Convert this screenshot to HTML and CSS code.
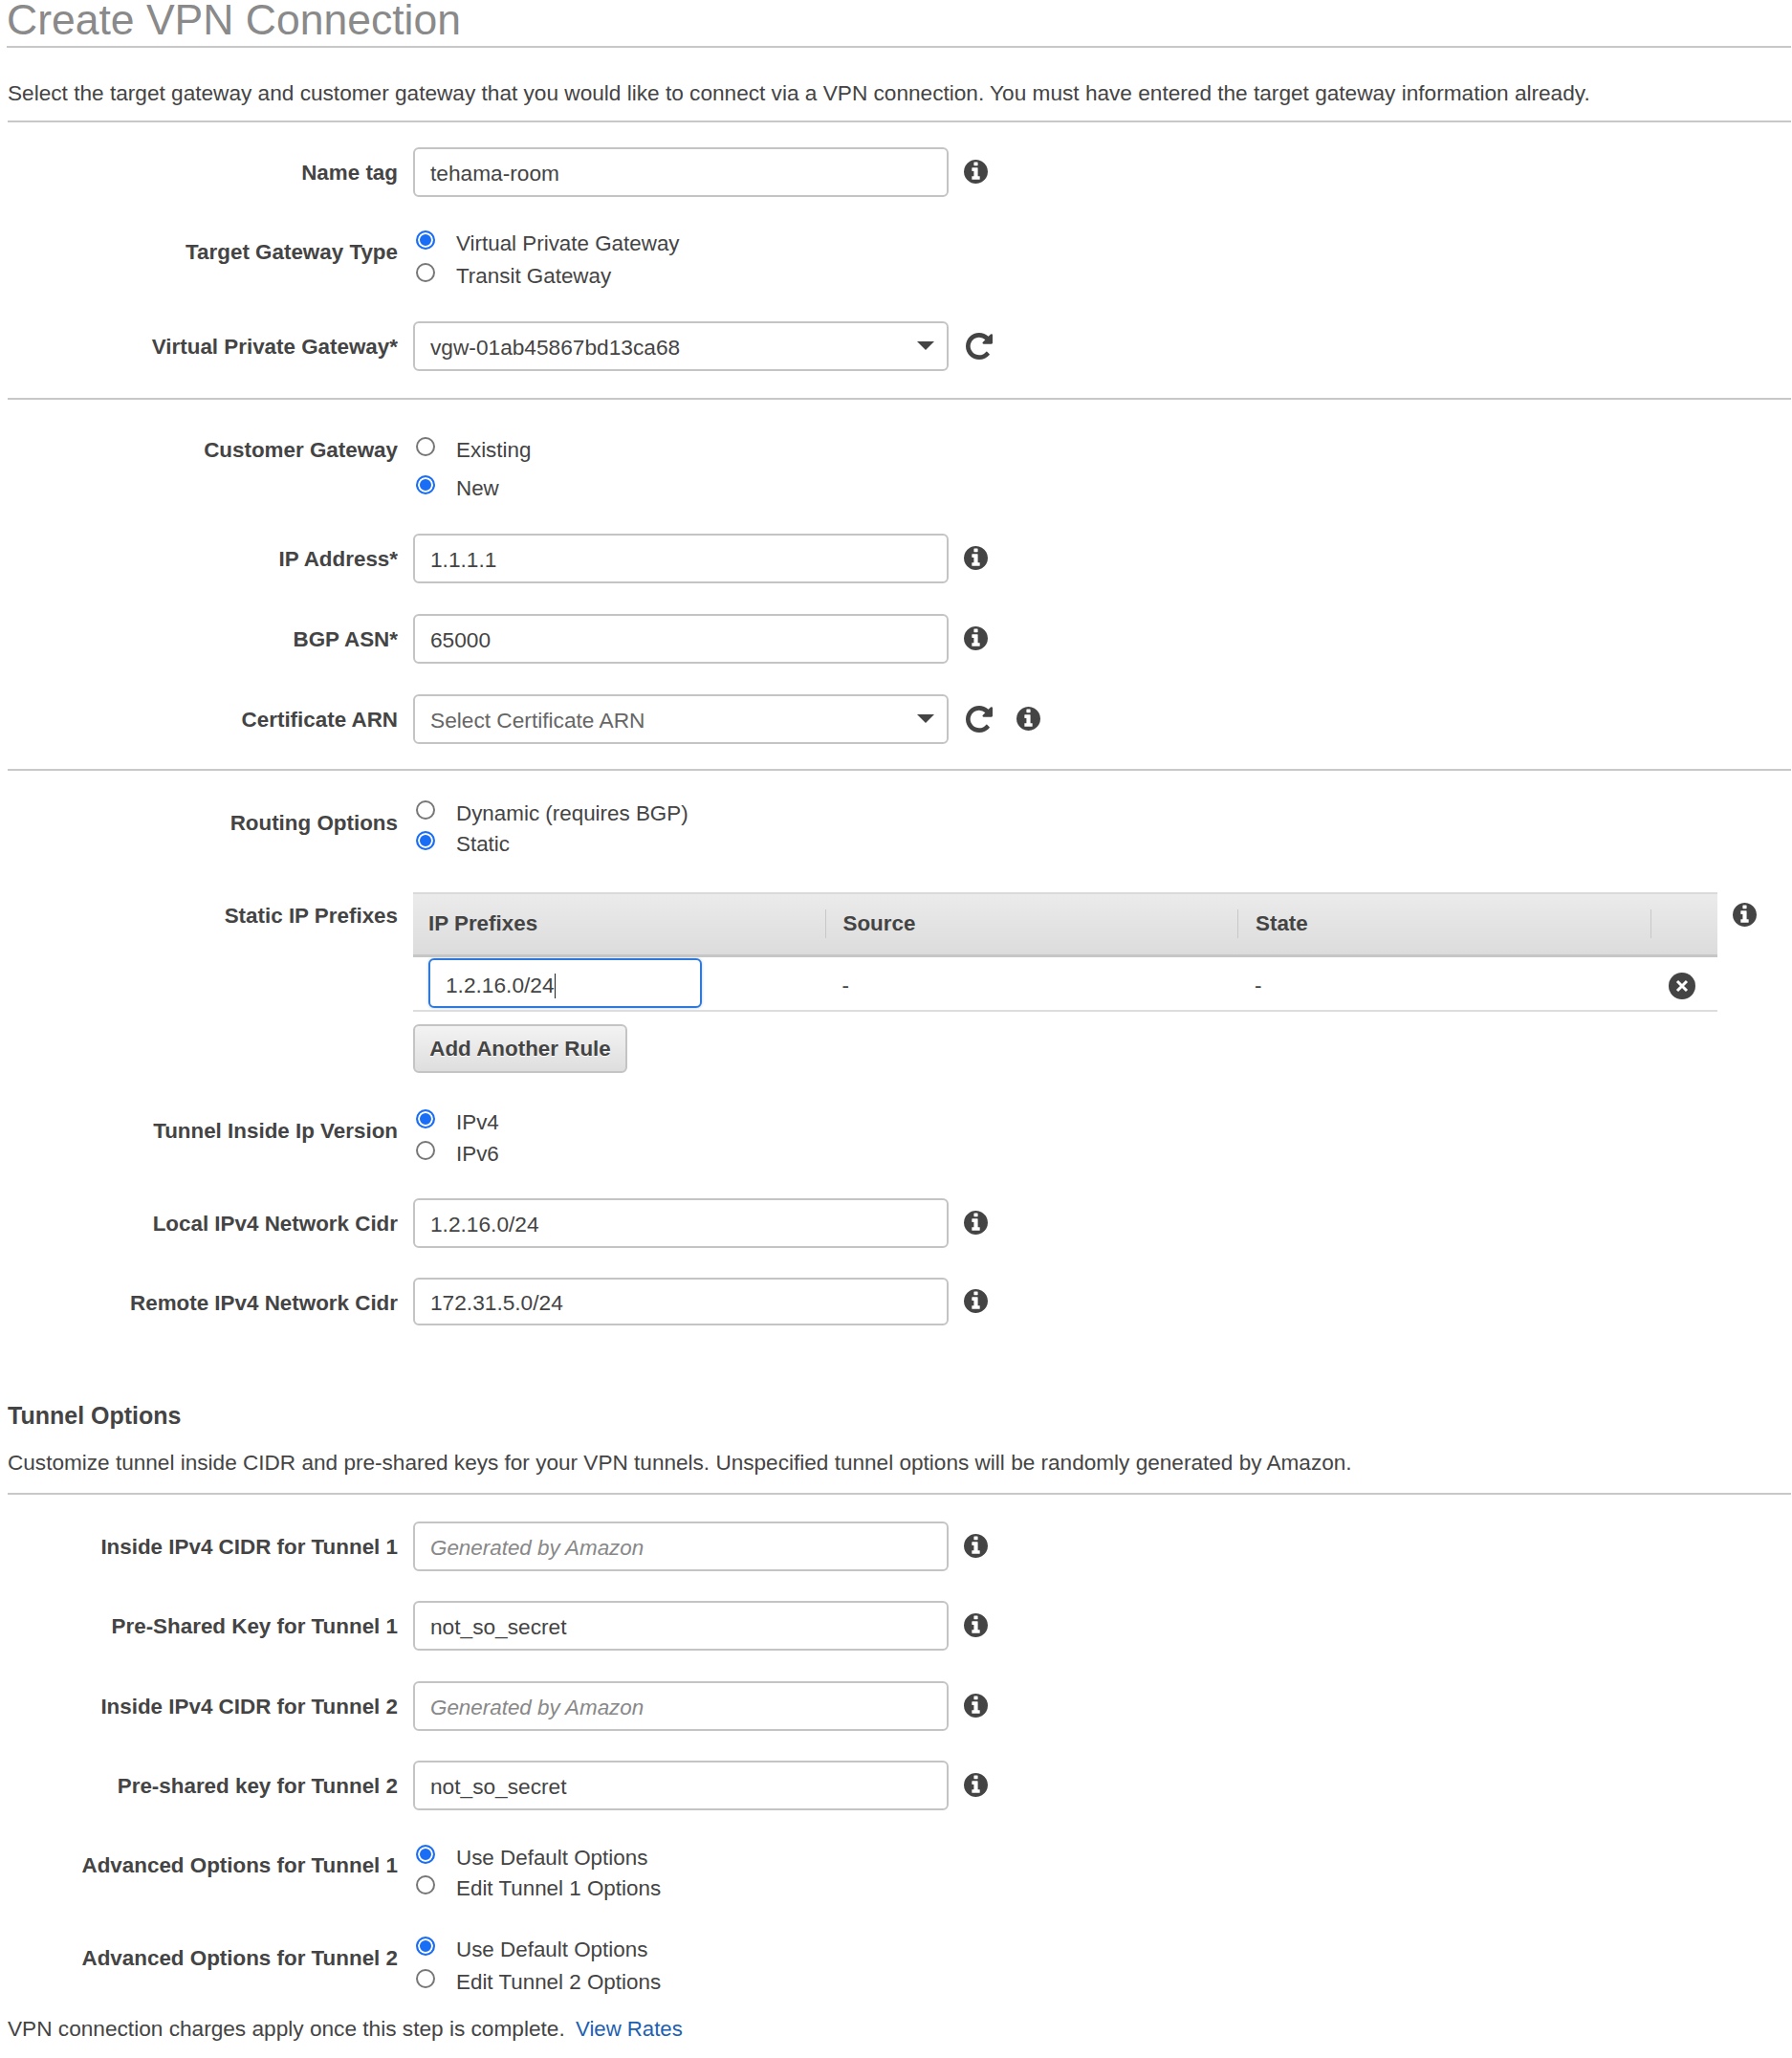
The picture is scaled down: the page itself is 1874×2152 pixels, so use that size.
FILE: index.html
```html
<!DOCTYPE html>
<html lang="en">
<head>
  <meta charset="UTF-8">
  <title>Create VPN Connection</title>
  <link rel="stylesheet" href="styles.css">
</head>
<body>
  <svg class="icon-defs" aria-hidden="true">
    <symbol id="i-info" viewBox="128 128 1536 1536">
      <path d="M1152 1376v-160q0-14-9-23t-23-9h-96v-512q0-14-9-23t-23-9h-320q-14 0-23 9t-9 23v160q0 14 9 23t23 9h96v320h-96q-14 0-23 9t-9 23v160q0 14 9 23t23 9h448q14 0 23-9t9-23zm-128-896v-160q0-14-9-23t-23-9h-192q-14 0-23 9t-9 23v160q0 14 9 23t23 9h192q14 0 23-9t9-23zm640 416q0 209-103 385.5t-279.5 279.5-385.5 103-385.5-103-279.5-279.5-103-385.5 103-385.5 279.5-279.5 385.5-103 385.5 103 279.5 279.5 103 385.5z"/>
    </symbol>
    <symbol id="i-repeat" viewBox="128 128 1536 1536">
      <path d="M1664 256v448q0 26-19 45t-45 19h-448q-42 0-59-40-17-39 14-69l138-138q-148-137-349-137-104 0-198.5 40.5t-163.5 109.5-109.5 163.5-40.5 198.5 40.5 198.5 109.5 163.5 163.5 109.5 198.5 40.5q119 0 225-52t179-147q7-10 23-12 15 0 25 9l137 138q9 8 9.5 20.5t-7.5 22.5q-109 132-264 204.5t-327 72.5q-156 0-298-61t-245-164-164-245-61-298 61-298 164-245 245-164 298-61q147 0 284.5 55.5t244.5 156.5l130-129q29-31 70-14 39 17 39 59z"/>
    </symbol>
  </svg>

  <h1 class="title">Create VPN Connection</h1>
  <p class="intro">Select the target gateway and customer gateway that you would like to connect via a VPN connection. You must have entered the target gateway information already.</p>

  <div class="section section-gateway">
    <div class="row">
      <label class="label">Name tag</label>
      <div class="field">
        <input class="text-input" type="text" value="tehama-room">
        <svg class="icon info"><use href="#i-info"/></svg>
      </div>
    </div>
    <div class="row row-radio gap-27">
      <label class="label">Target Gateway Type</label>
      <div class="options step-34">
        <label class="option"><input type="radio" name="target" checked><span>Virtual Private Gateway</span></label>
        <label class="option"><input type="radio" name="target"><span>Transit Gateway</span></label>
      </div>
    </div>
    <div class="row gap-34">
      <label class="label">Virtual Private Gateway*</label>
      <div class="field">
        <div class="select-wrap">
          <select class="text-input"><option>vgw-01ab45867bd13ca68</option></select>
        </div>
        <svg class="icon refresh"><use href="#i-repeat"/></svg>
      </div>
    </div>
  </div>

  <div class="section section-customer">
    <div class="row">
      <label class="label label-customer">Customer Gateway</label>
      <div class="options step-40">
        <label class="option"><input type="radio" name="customer"><span>Existing</span></label>
        <label class="option"><input type="radio" name="customer" checked><span>New</span></label>
      </div>
    </div>
    <div class="row gap-31">
      <label class="label">IP Address*</label>
      <div class="field">
        <input class="text-input" type="text" value="1.1.1.1">
        <svg class="icon info"><use href="#i-info"/></svg>
      </div>
    </div>
    <div class="row gap-31">
      <label class="label">BGP ASN*</label>
      <div class="field">
        <input class="text-input" type="text" value="65000">
        <svg class="icon info"><use href="#i-info"/></svg>
      </div>
    </div>
    <div class="row gap-31">
      <label class="label">Certificate ARN</label>
      <div class="field">
        <div class="select-wrap">
          <select class="text-input muted"><option>Select Certificate ARN</option></select>
        </div>
        <svg class="icon refresh"><use href="#i-repeat"/></svg>
        <svg class="icon info info-after"><use href="#i-info"/></svg>
      </div>
    </div>
  </div>

  <div class="section-routing">
    <div class="row row-radio">
      <label class="label label-routing">Routing Options</label>
      <div class="options step-32">
        <label class="option"><input type="radio" name="routing"><span>Dynamic (requires BGP)</span></label>
        <label class="option"><input type="radio" name="routing" checked><span>Static</span></label>
      </div>
    </div>
    <div class="row gap-38">
      <label class="label label-prefixes">Static IP Prefixes</label>
      <div>
        <div class="table-line">
          <table class="prefixes">
            <thead>
              <tr>
                <th><div class="th-inner">IP Prefixes</div></th>
                <th><div class="th-inner">Source</div></th>
                <th><div class="th-inner">State</div></th>
                <th></th>
              </tr>
            </thead>
            <tbody>
              <tr>
                <td><div class="focused-input">1.2.16.0/24<span class="caret"></span></div></td>
                <td class="dash">-</td>
                <td class="dash">-</td>
                <td class="remove">
                  <svg class="icon-close" viewBox="0 0 28 28"><circle cx="14" cy="14" r="14"/><path d="M9 9l10 10M19 9L9 19"/></svg>
                </td>
              </tr>
            </tbody>
          </table>
          <svg class="icon info info-table"><use href="#i-info"/></svg>
        </div>
        <button class="btn" type="button">Add Another Rule</button>
      </div>
    </div>
    <div class="row row-radio gap-32">
      <label class="label">Tunnel Inside Ip Version</label>
      <div class="options step-33">
        <label class="option"><input type="radio" name="ipver" checked><span>IPv4</span></label>
        <label class="option"><input type="radio" name="ipver"><span>IPv6</span></label>
      </div>
    </div>
    <div class="row">
      <label class="label">Local IPv4 Network Cidr</label>
      <div class="field">
        <input class="text-input" type="text" value="1.2.16.0/24">
        <svg class="icon info"><use href="#i-info"/></svg>
      </div>
    </div>
    <div class="row gap-30">
      <label class="label">Remote IPv4 Network Cidr</label>
      <div class="field">
        <input class="text-input text-input-short" type="text" value="172.31.5.0/24">
        <svg class="icon info"><use href="#i-info"/></svg>
      </div>
    </div>
  </div>

  <h2 class="subtitle">Tunnel Options</h2>
  <p class="intro intro-tunnel">Customize tunnel inside CIDR and pre-shared keys for your VPN tunnels. Unspecified tunnel options will be randomly generated by Amazon.</p>

  <div class="section-tunnel">
    <div class="row">
      <label class="label">Inside IPv4 CIDR for Tunnel 1</label>
      <div class="field">
        <input class="text-input" type="text" placeholder="Generated by Amazon">
        <svg class="icon info"><use href="#i-info"/></svg>
      </div>
    </div>
    <div class="row gap-30">
      <label class="label">Pre-Shared Key for Tunnel 1</label>
      <div class="field">
        <input class="text-input" type="text" value="not_so_secret">
        <svg class="icon info"><use href="#i-info"/></svg>
      </div>
    </div>
    <div class="row gap-31">
      <label class="label">Inside IPv4 CIDR for Tunnel 2</label>
      <div class="field">
        <input class="text-input" type="text" placeholder="Generated by Amazon">
        <svg class="icon info"><use href="#i-info"/></svg>
      </div>
    </div>
    <div class="row gap-30">
      <label class="label">Pre-shared key for Tunnel 2</label>
      <div class="field">
        <input class="text-input" type="text" value="not_so_secret">
        <svg class="icon info"><use href="#i-info"/></svg>
      </div>
    </div>
    <div class="row row-radio gap-29">
      <label class="label">Advanced Options for Tunnel 1</label>
      <div class="options step-32">
        <label class="option"><input type="radio" name="adv1" checked><span>Use Default Options</span></label>
        <label class="option"><input type="radio" name="adv1"><span>Edit Tunnel 1 Options</span></label>
      </div>
    </div>
    <div class="row row-radio gap-31">
      <label class="label">Advanced Options for Tunnel 2</label>
      <div class="options step-34">
        <label class="option"><input type="radio" name="adv2" checked><span>Use Default Options</span></label>
        <label class="option"><input type="radio" name="adv2"><span>Edit Tunnel 2 Options</span></label>
      </div>
    </div>
  </div>

  <p class="charges">VPN connection charges apply once this step is complete. <a href="#">View Rates</a></p>
</body>
</html>
```

FILE: styles.css
```css
* {
  margin: 0;
  padding: 0;
  box-sizing: border-box;
}
body {
  padding: 0 1px 15px 8px;
  font-family: "Liberation Sans", Arial, sans-serif;
  font-size: 22.4px;
  color: #444;
  background: #fff;
}
.icon-defs {
  display: none;
}
.title {
  margin-left: -1px;
  padding-bottom: 6px;
  font-size: 44.5px;
  font-weight: normal;
  line-height: 42px;
  color: #8a8a8a;
  border-bottom: 2px solid #c8c8c8;
}
.intro {
  margin-top: 32px;
  padding-bottom: 12px;
  font-size: 22.63px;
  line-height: 32px;
  border-bottom: 2px solid #c8c8c8;
}
.section {
  border-bottom: 2px solid #c8c8c8;
}
.section-gateway {
  padding: 26px 0 27px;
}
.section-customer {
  padding: 29px 0 25px;
}
.section-routing {
  padding-top: 25px;
}

/* rows */
.row {
  display: grid;
  grid-template-columns: 408px 1fr;
  column-gap: 16px;
  align-items: start;
  margin-top: 33px;
}
.section-gateway > .row:first-child,
.section-customer > .row:first-child,
.section-routing > .row:first-child,
.section-tunnel > .row:first-child {
  margin-top: 0;
}
.gap-27 { margin-top: 27px; }
.gap-29 { margin-top: 29px; }
.gap-30 { margin-top: 30px; }
.gap-31 { margin-top: 31px; }
.gap-32 { margin-top: 32px; }
.gap-34 { margin-top: 34px; }
.gap-38 { margin-top: 38px; }
.label {
  font-weight: bold;
  line-height: 53px;
  text-align: right;
}
.row-radio {
  align-items: center;
}
.row-radio .label {
  line-height: 32px;
  margin-bottom: 8px;
}
.row-radio .label-routing {
  margin-bottom: 4px;
}
.label-customer {
  line-height: 48px;
}
.label-prefixes {
  line-height: 50px;
}
.field {
  display: flex;
  align-items: center;
}

/* inputs */
.text-input {
  width: 560px;
  height: 52px;
  padding: 3px 15px 0 16px;
  font: 22.7px "Liberation Sans", Arial, sans-serif;
  color: #444;
  background: #fff;
  border: 2px solid #c4c4c4;
  border-radius: 6px;
  outline: none;
}
.text-input-short {
  height: 50px;
}
.text-input::placeholder {
  font-size: 22.4px;
  font-style: italic;
  color: #888;
  opacity: 1;
}
select.text-input {
  display: block;
  padding-top: 1px;
  appearance: none;
  -webkit-appearance: none;
}
.muted {
  color: #666;
}
.select-wrap {
  position: relative;
}
.select-wrap::after {
  content: "";
  position: absolute;
  top: 21px;
  right: 15px;
  border-top: 9px solid #444;
  border-left: 9px solid transparent;
  border-right: 9px solid transparent;
}

/* icons */
.icon {
  flex: none;
  fill: #444;
}
.info {
  width: 25px;
  height: 25px;
  margin: -1px 0 0 16px;
}
.refresh {
  width: 28px;
  height: 28px;
  margin-left: 18px;
}
.info-after {
  margin-left: 25px;
}
.info-table {
  margin: 11px 0 0 16px;
}
.icon-close {
  display: block;
  width: 28px;
  height: 28px;
  margin-left: 18px;
}
.icon-close circle {
  fill: #444;
}
.icon-close path {
  fill: none;
  stroke: #fff;
  stroke-width: 3;
}

/* radios */
.options {
  margin-left: 3px;
}
.option {
  display: flex;
  align-items: center;
  column-gap: 22px;
  padding-top: 7px;
  line-height: 32px;
}
.step-32 .option { height: 32px; }
.step-33 .option { height: 33px; }
.step-34 .option { height: 34px; }
.step-40 .option { height: 40px; }
.option input {
  flex: none;
  width: 20px;
  height: 20px;
  margin-bottom: 8px;
  appearance: none;
  -webkit-appearance: none;
  background: #fff;
  border: 2px solid #777;
  border-radius: 50%;
}
.option input:checked {
  background: #1a6ef5;
  border-color: #1a6ef5;
  box-shadow: inset 0 0 0 2px #fff;
}

/* prefixes table */
.table-line {
  display: flex;
  align-items: flex-start;
}
.prefixes {
  width: 1364px;
  table-layout: fixed;
  border-collapse: collapse;
}
.prefixes th {
  width: 431.5px;
  height: 65px;
  padding: 0;
  text-align: left;
  background: linear-gradient(#ebebeb, #dcdcdc);
  border-top: 2px solid #dadada;
  border-bottom: 3px solid #c6c6c6;
}
.prefixes th:last-child {
  width: auto;
}
.th-inner {
  height: 30px;
  padding-left: 16px;
  line-height: 30px;
  border-right: 1px solid #c8c8c8;
  box-shadow: 1px 0 0 #f6f6f6;
}
.prefixes th:nth-child(2) .th-inner,
.prefixes th:nth-child(3) .th-inner {
  padding-left: 18px;
}
.prefixes td {
  height: 58px;
  padding: 0;
  border-bottom: 2px solid #ddd;
}
.prefixes .dash {
  padding: 5px 0 0 17px;
}
.prefixes .remove {
  padding-top: 5px;
}
.focused-input {
  width: 286px;
  height: 52px;
  margin: 0 0 0 16px;
  padding: 0 16px;
  font-size: 22.7px;
  line-height: 52px;
  background: #fff;
  border: 2px solid #3079d8;
  border-radius: 6px;
  box-shadow: 0 0 3px rgba(48, 121, 216, 0.4);
}
.caret {
  display: inline-block;
  width: 1px;
  height: 26px;
  vertical-align: -6px;
  background: #222;
}
.btn {
  display: block;
  width: 224px;
  height: 51px;
  margin-top: 13px;
  font: bold 22.4px "Liberation Sans", Arial, sans-serif;
  color: #444;
  text-shadow: 0 1px 0 #fff;
  background: linear-gradient(#f3f3f3, #dedede);
  border: 2px solid #c4c4c4;
  border-radius: 6px;
}

/* tunnel options */
.subtitle {
  margin-top: 76px;
  font-size: 25px;
  line-height: 30px;
}
.intro-tunnel {
  margin-top: 19px;
  padding-bottom: 15px;
  font-size: 22.58px;
}
.section-tunnel {
  padding-top: 28px;
}
.charges {
  margin-top: 19px;
  font-size: 22.65px;
  line-height: 32px;
}
.charges a {
  margin-left: 5px;
  font-size: 22.2px;
  color: #1d5fb0;
  text-decoration: none;
}
```
